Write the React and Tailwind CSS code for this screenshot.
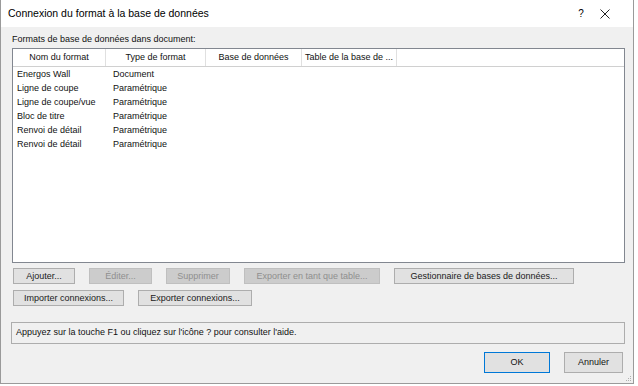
import React from "react";

const rows = [
  ["Energos Wall", "Document"],
  ["Ligne de coupe", "Paramétrique"],
  ["Ligne de coupe/vue", "Paramétrique"],
  ["Bloc de titre", "Paramétrique"],
  ["Renvoi de détail", "Paramétrique"],
  ["Renvoi de détail", "Paramétrique"],
];

const cols = [
  { label: "Nom du format", w: "w-[93px]" },
  { label: "Type de format", w: "w-[100px]" },
  { label: "Base de données", w: "w-[96px]" },
  { label: "Table de la base de ...", w: "w-[95px]" },
];

function Btn({ children, w, disabled }) {
  const base = "h-[16px] flex items-center justify-center border text-[9px] leading-none whitespace-nowrap";
  let tone = "bg-[#e1e1e1] border-[#adadad] text-[#1a1a1a]";
  if (disabled) tone = "bg-[#cccccc] border-[#bfbfbf] text-[#8f8f8f]";
  return <div className={`${base} ${tone} ${w}`}>{children}</div>;
}

export default function App() {
  return (
    <div className="w-[638px] h-[386px] bg-white" style={{ fontFamily: '"Liberation Sans", Arial, sans-serif' }}>
      <div className="w-[634px] h-[384px] border border-t-0 border-[#9a9a9a] bg-[#f0f0f0] flex flex-col relative">
        {/* barre de titre */}
        <div className="h-[27px] bg-white flex items-center pl-[7px] text-[10.5px] text-black">
          <span className="flex-1">Connexion du format à la base de données</span>
          <span className="w-[12px] text-center text-[10px] mr-[13px]">?</span>
          <svg className="mr-[23px]" width="10" height="10" viewBox="0 0 10 10">
            <path d="M0.5 0.5 L9.5 9.5 M9.5 0.5 L0.5 9.5" stroke="#222" strokeWidth="1" fill="none" />
          </svg>
        </div>

        <div className="pl-[11px] pr-[8px] flex flex-col text-[9px] text-[#111]">
          <div className="h-[14px] mt-[5px] leading-[14px] whitespace-nowrap">Formats de base de données dans document:</div>

          {/* liste */}
          <div className="mt-[2px] h-[215px] bg-white border border-[#828790] flex flex-col">
            <div className="h-[18px] flex border-b border-[#d0d0d0] bg-white">
              {cols.map((c) => (
                <div key={c.label} className={`${c.w} border-r border-[#e0e0e0] flex items-center justify-center whitespace-nowrap`}>
                  {c.label}
                </div>
              ))}
            </div>
            <div className="pt-[1px]">
              {rows.map((r, i) => (
                <div key={i} className="h-[14px] flex items-center whitespace-nowrap">
                  <div className="w-[93px] pl-[4px]">{r[0]}</div>
                  <div className="pl-[7px]">{r[1]}</div>
                </div>
              ))}
            </div>
          </div>

          {/* boutons */}
          <div className="mt-[5px] flex gap-[14px] pl-[1px]">
            <Btn w="w-[62px]">Ajouter...</Btn>
            <Btn w="w-[63px]" disabled>Éditer...</Btn>
            <Btn w="w-[64px]" disabled>Supprimer</Btn>
            <Btn w="w-[136px]" disabled>Exporter en tant que table...</Btn>
            <Btn w="w-[180px]">Gestionnaire de bases de données...</Btn>
          </div>
          <div className="mt-[6px] flex gap-[14px] pl-[1px]">
            <Btn w="w-[111px]">Importer connexions...</Btn>
            <Btn w="w-[114px]">Exporter connexions...</Btn>
          </div>

          {/* aide */}
          <div className="mt-[16px] -ml-[1px] h-[22px] border border-[#adadad] flex items-center pl-[4px] whitespace-nowrap">
            Appuyez sur la touche F1 ou cliquez sur l'icône ? pour consulter l'aide.
          </div>

          <div className="mt-[8px] flex justify-end gap-[14px] pr-[2px]">
            <div className="w-[66px] h-[21px] flex items-center justify-center border border-[#0078d7] bg-[#e1e1e1]">OK</div>
            <div className="w-[59px] h-[21px] flex items-center justify-center border border-[#adadad] bg-[#e1e1e1]">Annuler</div>
          </div>
        </div>

        <svg className="absolute right-[1px] bottom-[1px]" width="8" height="8" viewBox="0 0 8 8">
          <rect x="6" y="2" width="1" height="1" fill="#b0b0b0" />
          <rect x="4" y="4" width="1" height="1" fill="#b0b0b0" />
          <rect x="6" y="4" width="1" height="1" fill="#b0b0b0" />
          <rect x="2" y="6" width="1" height="1" fill="#b0b0b0" />
          <rect x="4" y="6" width="1" height="1" fill="#b0b0b0" />
          <rect x="6" y="6" width="1" height="1" fill="#b0b0b0" />
        </svg>
      </div>
    </div>
  );
}
